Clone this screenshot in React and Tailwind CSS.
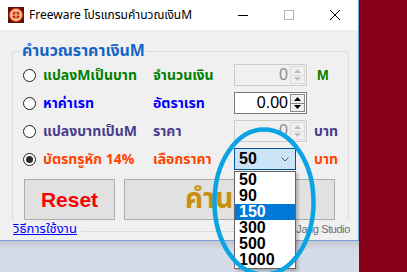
import React from "react";

const thai = { fontFamily: 'Tahoma, "Noto Sans Thai", "Noto Sans Thai UI", "Liberation Sans", "DejaVu Sans", sans-serif' };
const sans = { fontFamily: '"Liberation Sans", Arial, sans-serif' };

function AppIcon() {
  return (
    <svg width="16" height="16" viewBox="0 0 16 16">
      <rect x="0" y="0" width="16" height="16" fill="#5a1208" />
      <circle cx="8" cy="8" r="7.2" fill="#e0441a" />
      <circle cx="8" cy="8" r="5" fill="none" stroke="#ffe7c8" strokeWidth="1.4" />
      <circle cx="8" cy="8" r="2.6" fill="#b81c10" />
      <path d="M8 3.2V12.8M3.2 8H12.8" stroke="#ffd9a0" strokeWidth="1" />
    </svg>
  );
}

function Radio({ checked }) {
  return (
    <span className="flex h-[13px] w-[13px] shrink-0 items-center justify-center rounded-full border border-[#1f1f1f] bg-white">
      {checked && <span className="h-[7px] w-[7px] rounded-full bg-[#2b2b2b]" />}
    </span>
  );
}

function Arrow({ up, color }) {
  return (
    <svg width="7" height="4" viewBox="0 0 7 4">
      <path d={up ? "M0 4L3.5 0L7 4Z" : "M0 0L3.5 4L7 0Z"} fill={color} />
    </svg>
  );
}

function Spin({ value, disabled }) {
  return (
    <div
      className={
        disabled
          ? "flex h-[22px] w-[73px] border border-[#cccccc] bg-[#f0f0f0]"
          : "flex h-[22px] w-[73px] border border-[#7a7a7a] bg-white"
      }
    >
      <span
        className={
          disabled
            ? "flex-1 pr-[2px] text-right text-[16px] leading-[20px] text-[#8c8c8c]"
            : "flex-1 pr-[2px] text-right text-[16px] leading-[20px] text-black"
        }
        style={sans}
      >
        {value}
      </span>
      <div className="my-[1px] mr-[1px] flex w-[15px] flex-col">
        <div
          className={
            disabled
              ? "flex flex-1 items-center justify-center border border-[#dcdcdc] bg-[#f0f0f0]"
              : "flex flex-1 items-center justify-center border border-[#8a8a8a] bg-[#f0f0f0]"
          }
        >
          <Arrow up color={disabled ? "#bfbfbf" : "#000"} />
        </div>
        <div
          className={
            disabled
              ? "flex flex-1 items-center justify-center border border-t-0 border-[#dcdcdc] bg-[#f0f0f0]"
              : "flex flex-1 items-center justify-center border border-t-0 border-[#8a8a8a] bg-[#f0f0f0]"
          }
        >
          <Arrow color={disabled ? "#bfbfbf" : "#000"} />
        </div>
      </div>
    </div>
  );
}

const prices = ["50", "90", "150", "300", "500", "1000"];

function PriceSelect() {
  return (
    <div className="relative">
      <div className="flex h-[22px] w-[62px] items-center border border-[#005499] bg-[#cce4f7] pl-[4px] pr-[6px]">
        <span className="flex-1 text-[16px] font-bold leading-[20px] text-black" style={sans}>
          50
        </span>
        <svg width="8" height="5" viewBox="0 0 8 5">
          <path d="M0.5 0.5L4 4L7.5 0.5" fill="none" stroke="#555" strokeWidth="1" />
        </svg>
      </div>
      <ul className="absolute left-0 top-[23px] z-10 w-[62px] border border-[#646464] bg-white shadow-[2px_2px_3px_rgba(0,0,0,0.25)]">
        {prices.map((p) => (
          <li
            key={p}
            className={
              p === "150"
                ? "h-[16px] bg-[#0078d7] pl-[4px] text-[16px] font-bold leading-[16px] text-white"
                : "h-[16px] pl-[4px] text-[16px] font-bold leading-[16px] text-black"
            }
            style={sans}
          >
            {p}
          </li>
        ))}
      </ul>
    </div>
  );
}

const rows = [
  { checked: false, label: "แปลงMเป็นบาท", field: "จำนวนเงิน", color: "text-[#008000]", input: "0", disabled: true, unit: "M", unitColor: "text-[#008000]", unitPad: "ml-[10px]" },
  { checked: false, label: "หาค่าเรท", field: "อัตราเรท", color: "text-[#0000ff]", input: "0.00", disabled: false, unit: "", unitColor: "", unitPad: "" },
  { checked: false, label: "แปลงบาทเป็นM", field: "ราคา", color: "text-[#483d8b]", input: "0", disabled: true, unit: "บาท", unitColor: "text-[#483d8b]", unitPad: "ml-[7px]" },
  { checked: true, label: "บัตรทรูหัก 14%", field: "เลือกราคา", color: "text-[#ff4500]", select: true, unit: "บาท", unitColor: "text-[#ff4500]", unitPad: "ml-[18px]" },
];

export default function App() {
  return (
    <div className="relative flex h-[272px] w-[407px] overflow-hidden bg-[#860018]" style={thai}>
      <div className="flex w-[359px] flex-col">
        {/* window */}
        <div className="flex h-[241px] flex-col border-b border-r border-[#7aa0dc] bg-[#f0f0f0]">
          {/* title bar */}
          <div className="flex h-[30px] items-center bg-white">
            <div className="ml-[8px]">
              <AppIcon />
            </div>
            <span className="ml-[5px] text-[12px] text-black" style={thai}>
              Freeware โปรแกรมคำนวณเงินM
            </span>
            <div className="ml-auto flex h-full">
              <div className="flex w-[46px] items-center justify-center">
                <span className="h-px w-[10px] bg-black" />
              </div>
              <div className="flex w-[46px] items-center justify-center">
                <span className="h-[10px] w-[10px] border border-[#b4b4b4]" />
              </div>
              <div className="flex w-[46px] items-center justify-center">
                <svg width="10" height="10" viewBox="0 0 10 10">
                  <path d="M0 0L10 10M10 0L0 10" stroke="#000" strokeWidth="1" />
                </svg>
              </div>
            </div>
          </div>

          {/* client area */}
          <div className="flex flex-1 flex-col pl-[12px] pr-[9px] pt-[10px]">
            <fieldset className="rounded-[3px] border border-b-0 border-[#dcdcdc] pb-[1px]">
              <legend className="ml-[8px] px-[1px] text-[16px] font-bold leading-[22px] text-[#1565c8]">
                คำนวณราคาเงินM
              </legend>
              <div className="flex flex-col gap-[6px] pt-[2px]">
                {rows.map((r) => (
                  <div key={r.label} className="flex h-[22px] items-center">
                    <span className="ml-[10px]">
                      <Radio checked={r.checked} />
                    </span>
                    <span className={`ml-[7px] w-[110px] text-[14px] font-bold ${r.color}`}>{r.label}</span>
                    <span className={`w-[81px] text-[14px] font-bold ${r.color}`}>{r.field}</span>
                    {r.select ? <PriceSelect /> : <Spin value={r.input} disabled={r.disabled} />}
                    {r.unit && (
                      <span className={`${r.unitPad} text-[14px] font-bold ${r.unitColor}`} style={r.unit === "M" ? sans : thai}>
                        {r.unit}
                      </span>
                    )}
                  </div>
                ))}
              </div>
              <div className="ml-[11px] mt-[9px] flex gap-[9px]">
                <button className="flex h-[41px] w-[91px] items-center justify-center border border-[#adadad] bg-[#e1e1e1] text-[21px] font-bold text-[#ff0000]" style={sans}>
                  Reset
                </button>
                <button className="flex h-[41px] w-[211px] items-center justify-center border border-[#adadad] bg-[#e1e1e1] text-[28px] font-bold text-[#c8900a]">
                  คำนวณ
                </button>
              </div>
            </fieldset>
            <div className="flex h-[16px] items-center">
              <a className="ml-[1px] text-[13px] leading-[16px] text-[#0000ff] underline">วิธีการใช้งาน</a>
              <span className="mx-[4px] mt-[4px] h-px flex-1 bg-[#dcdcdc]" />
              <span className="mr-[-1px] text-[11px] leading-[16px] tracking-[-0.4px] text-[#6d6d6d]" style={sans}>
                Jang Studio
              </span>
            </div>
          </div>
        </div>
        {/* desktop below the window */}
        <div className="flex-1 bg-[linear-gradient(to_bottom,#c2c6ce,#d5dbe8_9px)]" />
      </div>
      <div className="flex-1" />

      {/* hand-drawn highlight ellipse */}
      <svg className="pointer-events-none absolute left-0 top-0 z-20" width="407" height="272">
        <ellipse cx="264" cy="202" rx="49.5" ry="72.5" fill="none" stroke="#0aa3e3" strokeWidth="4.5" />
      </svg>
    </div>
  );
}
